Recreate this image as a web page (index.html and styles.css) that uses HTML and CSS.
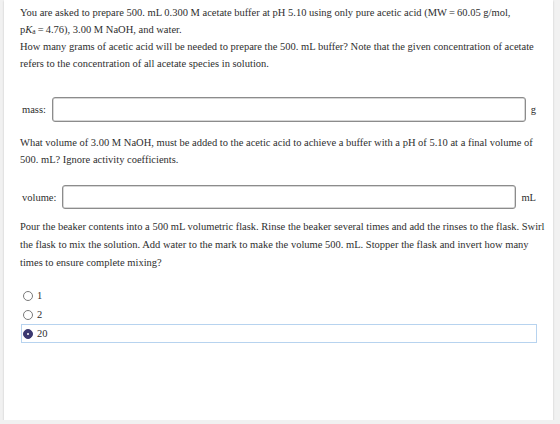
FILE: index.html
```html
<!DOCTYPE html>
<html>
<head>
<meta charset="utf-8">
<link rel="stylesheet" href="styles.css">
</head>
<body>
<div class="card">
  <div class="intro">
    <p>You are asked to prepare 500. mL 0.300 M acetate buffer at pH 5.10 using only pure acetic acid (MW&thinsp;=&thinsp;60.05 g/mol,<br>p<i>K</i><sub>a</sub>&thinsp;=&thinsp;4.76), 3.00 M NaOH, and water.</p>
    <p>How many grams of acetic acid will be needed to prepare the 500. mL buffer? Note that the given concentration of acetate<br>refers to the concentration of all acetate species in solution.</p>
  </div>
  <div class="row row-mass">
    <span class="label">mass:</span>
    <span class="field"></span>
    <span class="unit">g</span>
  </div>
  <p class="q3">What volume of 3.00 M NaOH, must be added to the acetic acid to achieve a buffer with a pH of 5.10 at a final volume of<br>500. mL? Ignore activity coefficients.</p>
  <div class="row row-vol">
    <span class="label">volume:</span>
    <span class="field"></span>
    <span class="unit">mL</span>
  </div>
  <p class="q4">Pour the beaker contents into a 500 mL volumetric flask. Rinse the beaker several times and add the rinses to the flask. Swirl<br>the flask to mix the solution. Add water to the mark to make the volume 500. mL. Stopper the flask and invert how many<br>times to ensure complete mixing?</p>
  <div class="options">
    <div class="opt"><span class="radio"></span><span>1</span></div>
    <div class="opt"><span class="radio"></span><span>2</span></div>
    <div class="opt selected"><span class="radio on"></span><span>20</span></div>
  </div>
</div>
</body>
</html>
```

FILE: styles.css
```css
html, body {
  margin: 0;
  padding: 0;
  background: #f1f1f1;
}
body {
  font-family: "Liberation Serif", "Times New Roman", serif;
  font-size: 10.5px;
  color: #2e2e2e;
}
.card {
  margin-left: 4px;
  width: 549px;
  height: 420px;
  box-sizing: border-box;
  background: #fff;
  box-shadow: 0 1px 2px rgba(0,0,0,0.18);
  padding: 4px 16px 0 16px;
}
p { margin: 0; white-space: nowrap; }
.intro p { line-height: 17px; }
sub { font-size: 7.5px; line-height: 0; vertical-align: -1px; }
.row {
  display: flex;
  align-items: center;
  padding-left: 2px;
}
.row-mass { margin-top: 25px; }
.row-vol { margin-top: 17px; margin-right: 1px; }
.label { margin-right: 6px; }
.field {
  flex: 1;
  height: 25px;
  box-sizing: border-box;
  border: 1px solid #8c8c8c;
  border-radius: 3px;
  box-shadow: inset 0 0 0 0.5px #b0b0b0;
}
.row-mass .unit { margin-left: 5px; margin-right: 1px; }
.row-vol .field { height: 24px; }
.row-vol .unit { margin-left: 5px; }
.q3 { margin-top: 12px; line-height: 17px; }
.q4 { margin-top: 9px; line-height: 18px; }
.options {
  margin-top: 14px;
  padding-left: 1px;
}
.opt {
  display: flex;
  align-items: center;
  height: 19px;
  box-sizing: border-box;
  padding-left: 2px;
}
.opt.selected {
  border: 1px solid #b7d3ef;
  padding-left: 1px;
}
.radio {
  width: 8px;
  height: 8px;
  border: 1px solid #7a7a7a;
  border-radius: 50%;
  margin-right: 4px;
  background: #fff;
}
.radio.on {
  background: #3b3870;
  border-color: #3b3870;
  position: relative;
}
.radio.on::after {
  content: "";
  position: absolute;
  left: 3px;
  top: 3px;
  width: 2px;
  height: 2px;
  border-radius: 50%;
  background: #fff;
}
```
